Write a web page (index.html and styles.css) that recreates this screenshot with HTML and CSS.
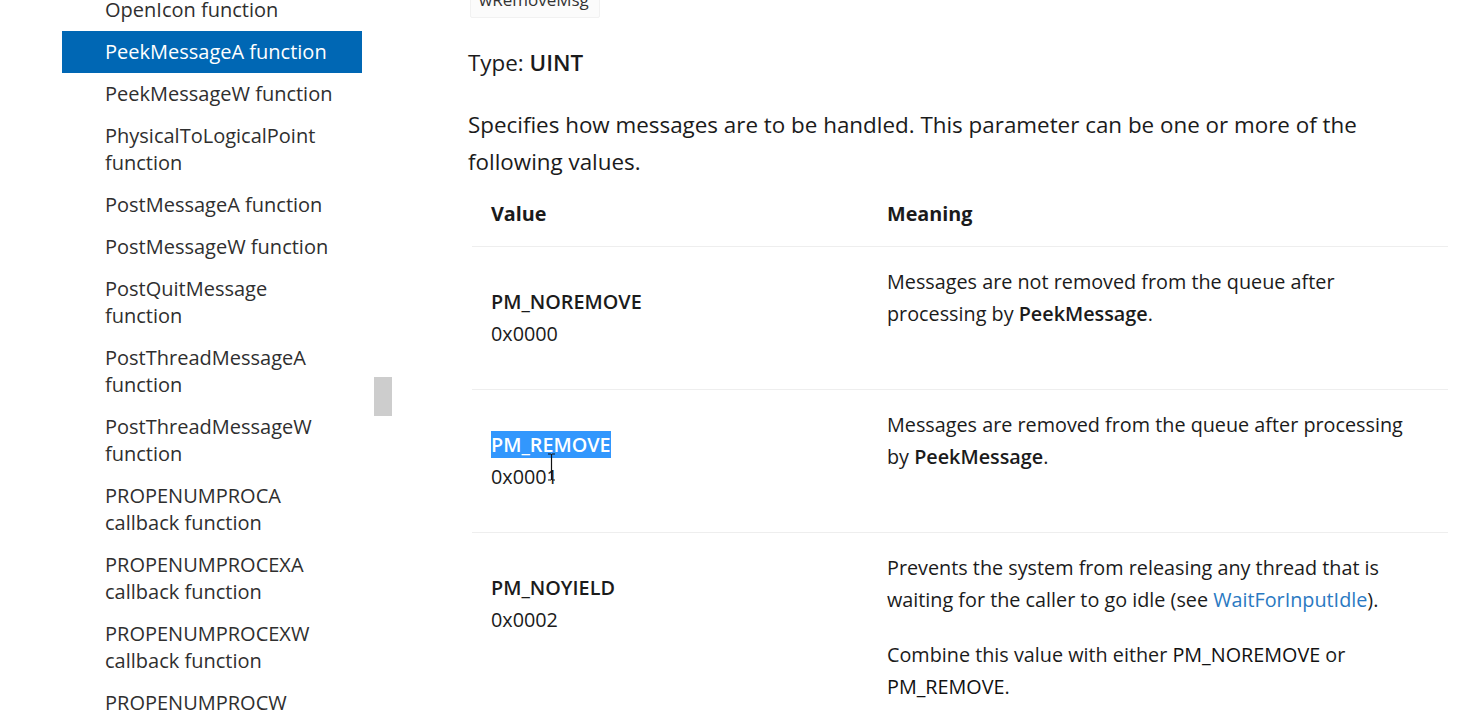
FILE: index.html
```html
<!DOCTYPE html>
<html lang="en">
<head>
<meta charset="utf-8">
<title>PeekMessageA function</title>
<link rel="stylesheet" href="styles.css">
</head>
<body>
<div class="page">
  <aside class="sidebar">
    <nav class="toc">
      <a class="toc-item">OpenIcon function</a>
      <a class="toc-item active">PeekMessageA function</a>
      <a class="toc-item">PeekMessageW function</a>
      <a class="toc-item">PhysicalToLogicalPoint<br>function</a>
      <a class="toc-item">PostMessageA function</a>
      <a class="toc-item">PostMessageW function</a>
      <a class="toc-item">PostQuitMessage<br>function</a>
      <a class="toc-item">PostThreadMessageA<br>function</a>
      <a class="toc-item">PostThreadMessageW<br>function</a>
      <a class="toc-item">PROPENUMPROCA<br>callback function</a>
      <a class="toc-item">PROPENUMPROCEXA<br>callback function</a>
      <a class="toc-item">PROPENUMPROCEXW<br>callback function</a>
      <a class="toc-item">PROPENUMPROCW<br>callback function</a>
    </nav>
    <div class="scroll-track"><div class="scroll-thumb"></div></div>
  </aside>

  <main class="content">
    <div class="param-name">wRemoveMsg</div>
    <p class="type">Type: <strong>UINT</strong></p>
    <p class="desc">Specifies how messages are to be handled. This parameter can be one or more of the<br>following values.</p>

    <table class="values">
      <thead>
        <tr><th class="col-value">Value</th><th class="col-meaning">Meaning</th></tr>
      </thead>
      <tbody>
        <tr>
          <td class="cell-value"><strong>PM_NOREMOVE</strong><br>0x0000</td>
          <td class="cell-meaning"><p>Messages are not removed from the queue after<br>processing by <strong>PeekMessage</strong>.</p></td>
        </tr>
        <tr>
          <td class="cell-value"><span class="cursor-wrap"><strong class="selected">PM_REMOVE</strong><svg class="ibeam" width="9" height="28" viewBox="0 0 9 28"><path d="M1 1h3M5 1h3M4.5 1v26M1 27h3M5 27h3" stroke="#111" stroke-width="1.2" fill="none"/></svg></span><br>0x0001</td>
          <td class="cell-meaning"><p>Messages are removed from the queue after processing<br>by <strong>PeekMessage</strong>.</p></td>
        </tr>
        <tr>
          <td class="cell-value"><strong>PM_NOYIELD</strong><br>0x0002</td>
          <td class="cell-meaning">
            <p>Prevents the system from releasing any thread that is<br>waiting for the caller to go idle (see <a class="link">WaitForInputIdle</a>).</p>
            <p>Combine this value with either <span class="const">PM_NOREMOVE</span> or<br><span class="const">PM_REMOVE</span>.</p>
          </td>
        </tr>
      </tbody>
    </table>
  </main>
</div>
</body>
</html>
```

FILE: styles.css
```css
html, body {
  margin: 0;
  padding: 0;
  background: #ffffff;
  height: 715px;
  overflow: hidden;
}

body {
  font-family: "Open Sans", "Noto Sans", "Liberation Sans", sans-serif;
  color: #1b1b1b;
}

.page {
  display: flex;
  align-items: flex-start;
}

/* ---------- sidebar ---------- */
.sidebar {
  display: flex;
  margin-left: 62px;
  margin-top: -11px;
}

.toc {
  display: flex;
  flex-direction: column;
  width: 300px;
}

.toc-item {
  display: block;
  padding: 7px 0 8px 43px;
  font-size: 20px;
  line-height: 27px;
  color: #2f2f2f;
  text-decoration: none;
  white-space: nowrap;
}

.toc-item.active {
  background: #0067b4;
  color: #ffffff;
}

.scroll-track {
  margin-left: 12px;
  width: 18px;
  padding-top: 388px;
}

.scroll-thumb {
  width: 18px;
  height: 39px;
  background: #cdcdcd;
}

/* ---------- content ---------- */
.content {
  margin-left: 76px;
  margin-top: -17px;
  flex: 1;
}

.param-name {
  display: inline-block;
  padding: 4px 10px 5px 8px;
  font-size: 17px;
  line-height: 24px;
  color: #333;
  background: #fbfbfb;
  border: 1px solid #f1f1f1;
  border-radius: 2px;
  margin-left: 2px;
}

.type {
  margin: 26px 0 25px;
  font-size: 22.4px;
  line-height: 37px;
}

.type strong {
  font-weight: 600;
}

.desc {
  margin: 0 0 4px;
  font-size: 22.4px;
  line-height: 37px;
  white-space: nowrap;
}

/* ---------- table ---------- */
.values {
  margin-left: 4px;
  width: 976px;
  border-collapse: collapse;
  font-size: 19.8px;
  line-height: 32px;
}

.values th {
  text-align: left;
  font-weight: 700;
  padding: 14px 19px 16px;
  border-bottom: 1px solid #eeeeee;
}

.col-value {
  width: 358px;
}

.values td {
  vertical-align: top;
  border-bottom: 1px solid #eeeeee;
  white-space: nowrap;
}

.cell-value {
  padding: 39px 19px 19px;
}

.cell-value strong {
  font-weight: 600;
}

.cell-meaning {
  padding: 19px 19px 36px;
}

.cell-meaning p {
  margin: 0 0 23px;
}

.cell-meaning strong {
  font-weight: 600;
}

.const {
  color: #111;
}

.link {
  color: #2a79c2;
  text-decoration: none;
}

.cursor-wrap {
  position: relative;
}

.selected {
  background: #3297fd;
  color: #ffffff;
}

.ibeam {
  position: absolute;
  left: 56px;
  top: 22px;
}
```
